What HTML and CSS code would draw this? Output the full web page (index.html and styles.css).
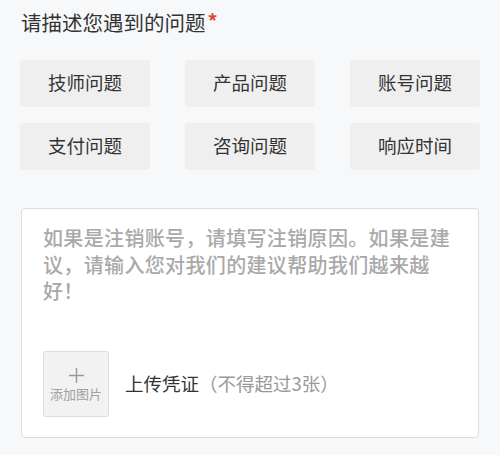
FILE: index.html
```html
<!DOCTYPE html>
<html lang="zh-CN">
<head>
<meta charset="utf-8">
<link rel="stylesheet" href="styles.css">
</head>
<body>
<div class="page">
  <div class="title">请描述您遇到的问题<span class="req">*</span></div>
  <div class="tags">
    <div class="tag">技师问题</div>
    <div class="tag">产品问题</div>
    <div class="tag">账号问题</div>
    <div class="tag">支付问题</div>
    <div class="tag">咨询问题</div>
    <div class="tag">响应时间</div>
  </div>
  <div class="box">
    <div class="placeholder">如果是注销账号，请填写注销原因。如果是建议，请输入您对我们的建议帮助我们越来越好！</div>
    <div class="upload">
      <div class="add">
        <svg class="plus" width="17" height="17" viewBox="0 0 17 17"><path d="M8.5 1v15M1 8.5h15" stroke="#999" stroke-width="1.4" fill="none"/></svg>
        <div class="add-label">添加图片</div>
      </div>
      <div class="upload-text">上传凭证<span class="hint">（不得超过3张）</span></div>
    </div>
  </div>
</div>
</body>
</html>
```

FILE: styles.css
```css
html, body {
  margin: 0;
  padding: 0;
  background: #f7f8fa;
}
body {
  font-family: "Noto Sans CJK SC", "Noto Sans", sans-serif;
  color: #333;
}
.page {
  padding: 7px 20px 0 20px;
}
.title {
  font-size: 20.5px;
  line-height: 28px;
  margin-left: 1px;
  color: #333;
}
.req {
  color: #e4472c;
  font-size: 20px;
  font-weight: bold;
  margin-left: 2px;
  vertical-align: 2px;
}
.tags {
  margin-top: 24px;
  display: grid;
  grid-template-columns: repeat(3, 130px);
  column-gap: 35px;
  row-gap: 16px;
}
.tag {
  height: 47px;
  box-sizing: border-box;
  padding-bottom: 4px;
  background: #efeff0;
  border-radius: 3px;
  display: flex;
  align-items: center;
  justify-content: center;
  font-size: 18.5px;
  color: #333;
}
.box {
  margin-top: 38px;
  margin-left: 1px;
  width: 458px;
  height: 230px;
  background: #fff;
  border: 1px solid #dcdcdc;
  border-radius: 4px;
  padding: 16px 21px 0 21px;
  box-sizing: border-box;
}
.placeholder {
  font-size: 20px;
  font-weight: 500;
  letter-spacing: 0.35px;
  line-height: 26.5px;
  color: #a9a9a9;
}
.upload {
  margin-top: 46px;
  display: flex;
  align-items: center;
}
.add {
  width: 66px;
  height: 66px;
  box-sizing: border-box;
  background: #f2f2f2;
  border: 1px solid #dedede;
  border-radius: 3px;
  display: flex;
  flex-direction: column;
  align-items: center;
  padding-top: 15px;
}
.plus {
  display: block;
}
.add-label {
  margin-top: 2px;
  font-size: 13px;
  line-height: 16px;
  color: #a0a0a0;
}
.upload-text {
  margin-left: 16px;
  margin-bottom: 2px;
  font-size: 18.5px;
  color: #333;
}
.hint {
  color: #999;
}
```
